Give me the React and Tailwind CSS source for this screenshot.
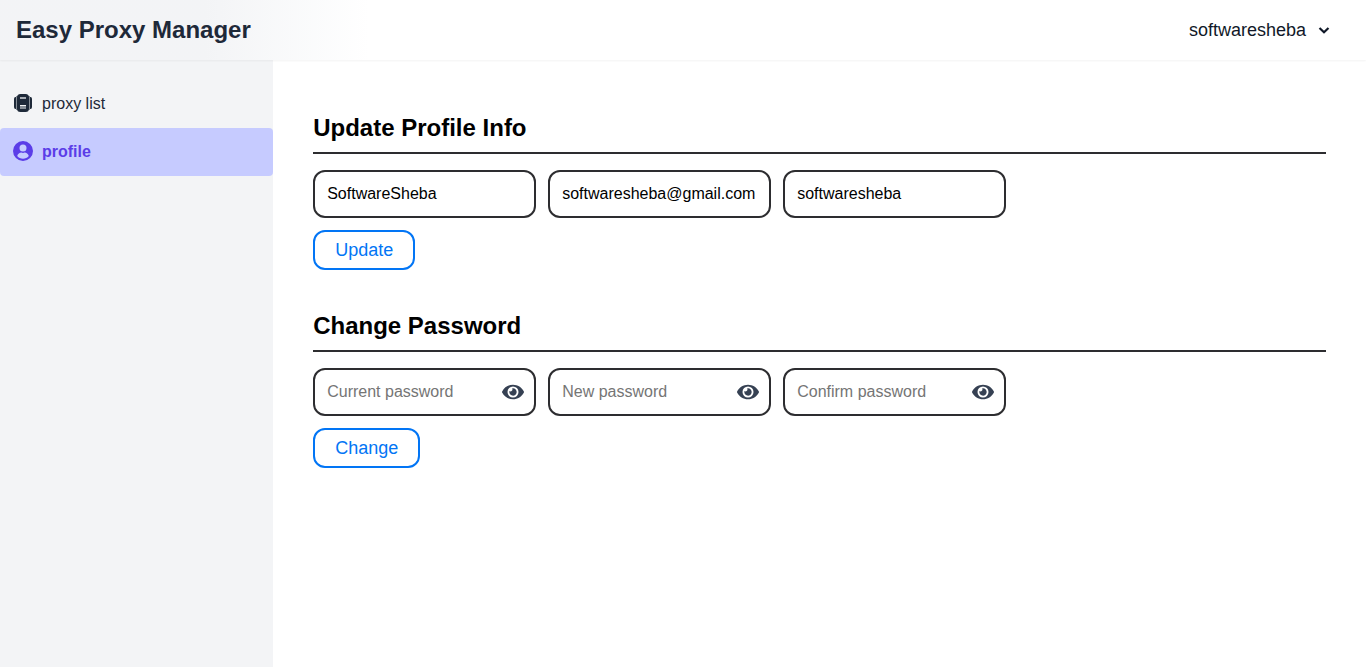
import React from "react";
import { FaEye } from "react-icons/fa";

function ProxyIcon() {
  return (
    <svg viewBox="0 0 22 22" className="size-[22px]" fill="currentColor" aria-hidden="true">
      <path d="M4 5H3.5Q2 5 2 7V15Q2 17 3.5 17H4Z" />
      <path d="M18 5H18.5Q20 5 20 7V15Q20 17 18.5 17H18Z" />
      <path opacity="0.5" d="M4 4H6V18H4ZM16 4H18V18H16Z" />
      <path
        fillRule="evenodd"
        d="M8.500 2H13.500Q17 2 17 5.500V16.500Q17 20 13.500 20H8.500Q5 20 5 16.500V5.500Q5 2 8.500 2ZM8 5V7H14V5ZM8 13V14H14V13ZM8 14V17H14V14Z"
      />
      <path opacity="0.35" d="M8 5H14V7H8Z" />
      <path opacity="0.5" d="M8 14H14V17H8Z" />
    </svg>
  );
}

function UserIcon() {
  return (
    <svg viewBox="0 0 20 20" className="size-5" fill="currentColor" aria-hidden="true">
      <path
        fillRule="evenodd"
        d="M10 0A10 10 0 1 0 10 20A10 10 0 1 0 10 0ZM10 3.400A3.500 3.600 0 1 1 10 10.600A3.500 3.600 0 1 1 10 3.400ZM4.200 15C4.800 12.800 6.700 11.500 8.200 11.500Q10 12.300 11.800 11.500C13.300 11.500 15.200 12.800 15.800 15C14.400 16.800 12.300 17.700 10 17.700C7.700 17.700 5.600 16.800 4.200 15Z"
      />
    </svg>
  );
}

function ChevronIcon() {
  return (
    <svg viewBox="0 0 20 20" className="size-5" fill="none" stroke="currentColor" strokeWidth="2.2" aria-hidden="true">
      <path d="M5.500 8L10 12.300L14.500 8" />
    </svg>
  );
}

function NavItem({ href, active, icon, label }) {
  return (
    <a
      href={href}
      aria-current={active ? "page" : undefined}
      className={`flex h-12 items-center gap-2 rounded px-3 text-base ${
        active ? "bg-[#c6cbff] font-bold text-[#5b3de8]" : "text-gray-800"
      }`}
    >
      <span className="mb-0.5 flex size-[22px] shrink-0 items-center justify-center">{icon}</span>
      {label}
    </a>
  );
}

function Section({ title, action, children }) {
  return (
    <section>
      <h2 className="border-b-2 border-[#2d2d30] pb-2 text-2xl leading-8 font-bold text-black">{title}</h2>
      <form className="pt-4" onSubmit={(e) => e.preventDefault()}>
        <div className="flex flex-wrap gap-3">{children}</div>
        <button
          type="submit"
          className="mt-3 h-10 rounded-xl border-2 border-[#0275f5] px-5 text-lg leading-7 text-[#0275f5]"
        >
          {action}
        </button>
      </form>
    </section>
  );
}

const field =
  "h-12 w-full rounded-xl border-2 border-[#2d2d30] bg-white pl-3 text-base text-black placeholder:text-[#757575]";

function TextField({ label, type = "text", value }) {
  return (
    <div className="w-[223px]">
      <input aria-label={label} type={type} defaultValue={value} className={`${field} pr-3`} />
    </div>
  );
}

function PasswordField({ label }) {
  const [shown, setShown] = React.useState(false);
  return (
    <div className="relative w-[223px]">
      <input
        aria-label={label}
        type={shown ? "text" : "password"}
        placeholder={label}
        className={`${field} pr-10`}
      />
      <button
        type="button"
        aria-label={shown ? "Hide password" : "Show password"}
        onClick={() => setShown(!shown)}
        className="absolute inset-y-0 right-3 flex items-center text-gray-700"
      >
        <FaEye size={22} />
      </button>
    </div>
  );
}

export default function App() {
  return (
    <div className="flex min-h-screen flex-col bg-white font-['Liberation_Sans',Arial,sans-serif]">
      <header className="relative flex h-[60px] items-center justify-between bg-linear-to-r from-gray-100 from-15% to-white to-27% pr-8 pl-4 shadow-[0_1px_2px_rgba(0,0,0,0.05)]">
        <h1 className="text-2xl leading-8 font-bold text-gray-800">Easy Proxy Manager</h1>
        <button type="button" className="flex items-center gap-2 text-lg leading-7 text-gray-900">
          softwaresheba
          <ChevronIcon />
        </button>
      </header>
      <div className="flex flex-1">
        <nav className="w-1/5 shrink-0 bg-gray-100 pt-5">
          <NavItem href="#proxy-list" icon={<ProxyIcon />} label="proxy list" />
          <NavItem href="#profile" active icon={<UserIcon />} label="profile" />
        </nav>
        <main className="flex flex-1 flex-col gap-10 px-10 pt-[52px] pb-10">
          <Section title="Update Profile Info" action="Update">
            <TextField label="Name" value="SoftwareSheba" />
            <TextField label="Email" type="email" value="softwaresheba@gmail.com" />
            <TextField label="Username" value="softwaresheba" />
          </Section>
          <Section title="Change Password" action="Change">
            <PasswordField label="Current password" />
            <PasswordField label="New password" />
            <PasswordField label="Confirm password" />
          </Section>
        </main>
      </div>
    </div>
  );
}
